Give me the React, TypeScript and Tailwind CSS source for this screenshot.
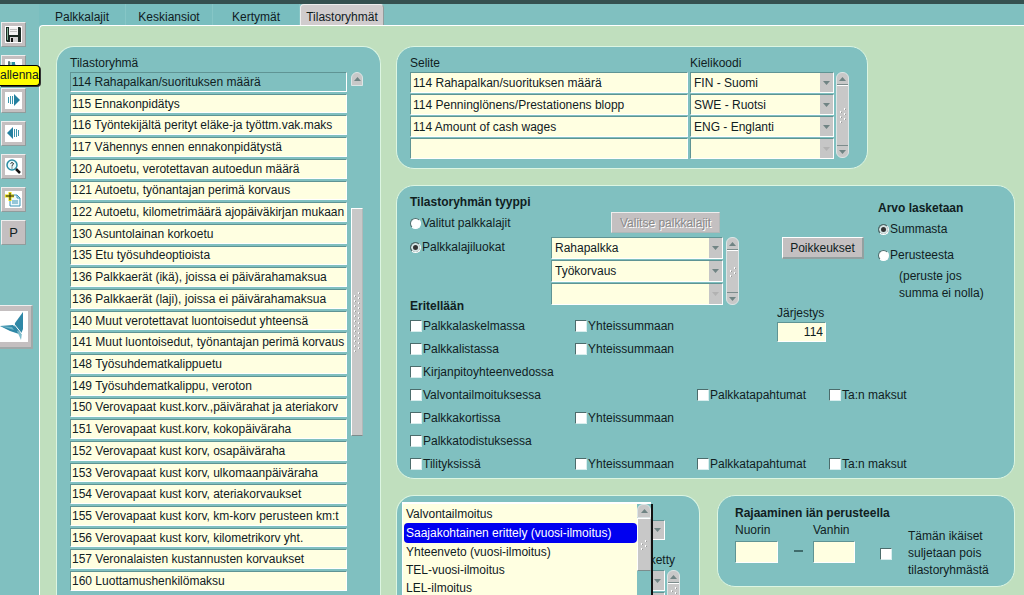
import type { ReactNode } from "react";

const groups = [
  "114 Rahapalkan/suorituksen määrä",
  "115 Ennakonpidätys",
  "116 Työntekijältä perityt eläke-ja työttm.vak.maks",
  "117 Vähennys ennen ennakonpidätystä",
  "120 Autoetu, verotettavan autoedun määrä",
  "121 Autoetu, työnantajan perimä korvaus",
  "122 Autoetu, kilometrimäärä ajopäiväkirjan mukaan",
  "130 Asuntolainan korkoetu",
  "135 Etu työsuhdeoptioista",
  "136 Palkkaerät (ikä), joissa ei päivärahamaksua",
  "136 Palkkaerät (laji), joissa ei päivärahamaksua",
  "140 Muut verotettavat luontoisedut yhteensä",
  "141 Muut luontoisedut, työnantajan perimä korvaus",
  "148 Työsuhdematkalippuetu",
  "149 Työsuhdematkalippu, veroton",
  "150 Verovapaat kust.korv.,päivärahat ja ateriakorv",
  "151 Verovapaat kust.korv, kokopäiväraha",
  "152 Verovapaat kust korv, osapäiväraha",
  "153 Verovapaat kust korv, ulkomaanpäiväraha",
  "154 Verovapaat kust korv, ateriakorvaukset",
  "155 Verovapaat kust korv, km-korv perusteen km:t",
  "156 Verovapaat kust korv, kilometrikorv yht.",
  "157 Veronalaisten kustannusten korvaukset",
  "160 Luottamushenkilömaksu",
];

const languages = [
  ["114 Rahapalkan/suorituksen määrä", "FIN - Suomi"],
  ["114 Penninglönens/Prestationens blopp", "SWE - Ruotsi"],
  ["114 Amount of cash wages", "ENG - Englanti"],
  ["", ""],
];

const breakdowns = [
  { name: "Palkkalaskelmassa", row: "row-start-2", total: true, events: false },
  { name: "Palkkalistassa", row: "row-start-3", total: true, events: false },
  { name: "Kirjanpitoyhteenvedossa", row: "row-start-4", total: false, events: false },
  { name: "Valvontailmoituksessa", row: "row-start-5", total: false, events: true },
  { name: "Palkkakortissa", row: "row-start-6", total: true, events: false },
  { name: "Palkkatodistuksessa", row: "row-start-7", total: false, events: false },
  { name: "Tilityksissä", row: "row-start-8", total: true, events: true },
];

const reports = [
  "Valvontailmoitus",
  "Saajakohtainen erittely (vuosi-ilmoitus)",
  "Yhteenveto (vuosi-ilmoitus)",
  "TEL-vuosi-ilmoitus",
  "LEL-ilmoitus",
];

const field =
  "block min-w-0 border border-t-[#5f9494] border-l-[#5f9494] border-r-white border-b-white bg-[#ffffe1] outline-none";

const panel = "border border-[#dcf5e2] bg-[#80c0c0]";

function Arrow({ up = false, faint = false }: { up?: boolean; faint?: boolean }) {
  return (
    <svg width="7" height="4" viewBox="0 0 7 4" aria-hidden="true">
      <path d={up ? "M0 4 3.500 0 7 4z" : "M0 0h7L3.500 4z"} fill={faint ? "#b2b2b2" : "#708484"} />
    </svg>
  );
}

function Select({
  value,
  label,
  faint = false,
  className = "",
}: {
  value: string;
  label: string;
  faint?: boolean;
  className?: string;
}) {
  return (
    <div className={`relative ${className}`}>
      <select aria-label={label} className={`${field} h-full w-full appearance-none pr-4 pl-[3px]`}>
        <option>{value}</option>
      </select>
      <span className="pointer-events-none absolute top-px right-px bottom-px flex w-[13px] items-center justify-center bg-[#c6c6c6]">
        <Arrow faint={faint} />
      </span>
    </div>
  );
}

function Grip({ rows }: { rows: number }) {
  return (
    <svg width="8" height={rows * 5} aria-hidden="true">
      {Array.from({ length: rows }, (_, i) => (
        <g key={i}>
          <rect x="1" y={i * 5 + 3} width="1" height="2" fill="#fff" />
          <rect x="2" y={i * 5 + 4} width="1" height="1" fill="#999" />
          <rect x="5" y={i * 5} width="1" height="2" fill="#fff" />
          <rect x="6" y={i * 5 + 1} width="1" height="1" fill="#999" />
        </g>
      ))}
    </svg>
  );
}

function ScrollBar({ rows = 2 }: { rows?: number }) {
  return (
    <div className="flex w-[13px] shrink-0 flex-col overflow-hidden rounded-md border border-[#dde6e6] bg-[#c8c8c8]">
      <span className="flex h-3 shrink-0 items-center justify-center border-b border-[#7c8c8c]">
        <Arrow up />
      </span>
      <span className="flex flex-1 items-center justify-center border-t border-white">
        <Grip rows={rows} />
      </span>
      <span className="flex h-3 shrink-0 items-center justify-center border-t border-[#7c8c8c]">
        <Arrow />
      </span>
    </div>
  );
}

const box =
  "size-3 shrink-0 appearance-none border border-t-[#4c6c6c] border-l-[#4c6c6c] border-r-[#d8eeee] border-b-[#d8eeee] bg-white";

function Check({ children, className = "" }: { children: ReactNode; className?: string }) {
  return (
    <label className={`flex items-center gap-px ${className}`}>
      <input type="checkbox" className={box} />
      {children}
    </label>
  );
}

function Radio({ name, checked, children }: { name: string; checked?: boolean; children: ReactNode }) {
  return (
    <label className="flex h-[18px] items-center gap-px">
      <input
        type="radio"
        name={name}
        defaultChecked={checked}
        className="size-[11px] shrink-0 appearance-none rounded-full border border-t-[#4c6c6c] border-l-[#4c6c6c] border-r-white border-b-white bg-white checked:bg-[#333] checked:shadow-[inset_0_0_0_2px_#d5e5e5]"
      />
      {children}
    </label>
  );
}

function ToolButton({ label, children }: { label: string; children: ReactNode }) {
  return (
    <button
      aria-label={label}
      className="flex size-[25px] items-center justify-center border border-t-[#eee] border-l-[#eee] border-r-[#909c9c] border-b-[#909c9c] bg-[#c4bfc0]"
    >
      {children}
    </button>
  );
}

function Glyph({ children }: { children: ReactNode }) {
  return (
    <svg width="17" height="17" viewBox="0 0 17 17" className="bg-white" aria-hidden="true">
      {children}
    </svg>
  );
}

function Toolbar() {
  return (
    <nav className="relative w-[39px] shrink-0 pt-[18px]">
      <div className="flex flex-col gap-2 pl-px">
        <ToolButton label="Tallenna">
          <Glyph>
            <path d="M1 1h14l1 1v14H2l-1-1z" fill="#1c2a24" />
            <path d="M2 2h1v12H2z" fill="#7fae92" />
            <path d="M4 1h9v8H4z" fill="#f4f4f4" />
            <path d="M5 3.500h7M5 5.500h7" stroke="#c0c0c0" />
            <path d="M5 11h8v5H5z" fill="#d4d4d4" />
            <path d="M6 12h2v4H6z" fill="#111" />
          </Glyph>
        </ToolButton>
        <ToolButton label="Avaa">
          <Glyph>
            <path d="M3 3h6l2 3v8H3z" fill="#9fd0c8" />
            <path d="M4 2v8M3 7l6 3" stroke="#123" />
            <path d="M7 3h3v3H7z" fill="#2b8f9f" />
          </Glyph>
        </ToolButton>
        <ToolButton label="Seuraava">
          <Glyph>
            <path d="M9 2l6 6-6 6z" fill="#2480a0" />
            <path d="M3.500 5v6M5.500 4v8M7.500 4v8" stroke="#3a94ac" />
          </Glyph>
        </ToolButton>
        <ToolButton label="Edellinen">
          <Glyph>
            <path d="M8 2L2 8l6 6z" fill="#2480a0" />
            <path d="M9.500 4v8M11.500 4v8M13.500 5v6" stroke="#3a94ac" />
          </Glyph>
        </ToolButton>
        <ToolButton label="Haku">
          <Glyph>
            <circle cx="7" cy="7" r="5" fill="#e8f8fa" stroke="#2b8ca4" strokeWidth="1.500" />
            <path d="M5.500 5.500q1.500-2 3 0 0 1-1.500 2v1M7 9.500v1" stroke="#222" fill="none" />
            <path d="M11 11l4 4" stroke="#111" strokeWidth="2.500" />
          </Glyph>
        </ToolButton>
        <ToolButton label="Uusi">
          <Glyph>
            <path d="M5 4h7l3 3v8H5z" fill="#eef9fb" stroke="#3a94b4" />
            <path d="M12 4v3h3M7 12h6M7 10h6" stroke="#3a94b4" fill="none" />
            <path d="M0 5h9M5 1v9" stroke="#e8dc10" strokeWidth="3" />
            <path d="M1 5h8M5 2v7" stroke="#222" />
          </Glyph>
        </ToolButton>
        <ToolButton label="P">
          <span className="text-[13px]">P</span>
        </ToolButton>
      </div>
      <button
        aria-label="Etusivu"
        className="mt-[60px] flex h-11 w-[33px] items-center border-t border-r-2 border-b-2 border-t-[#eee] border-r-[#a0a8a8] border-b-[#a0a8a8] bg-[#c4bfc0]"
      >
        <svg width="28" height="31" viewBox="0 0 28 31" className="bg-white" aria-hidden="true">
          <path d="M23 1v17l-2 5-7-6 1-5z" fill="#2f87a6" />
          <path d="M0 15l13-1 3 3 3 6-9-3z" fill="#2f87a6" />
          <path d="M0 15l12 1 2 3z" fill="#6fb4c8" />
          <path d="M17 20l5 2-1 7z" fill="#7cbccc" />
          <path d="M14 13l8 10" stroke="#fff" />
        </svg>
      </button>
      <div
        role="tooltip"
        className="absolute top-[61px] -right-px left-0 rounded-r-sm border border-l-0 border-black bg-[#ffff00] leading-[19px] shadow-[1px_1px_0_#333]"
      >
        allenna
      </div>
    </nav>
  );
}

function Tabs() {
  return (
    <div role="tablist" className="flex h-[21px] items-stretch">
      {["Palkkalajit", "Keskiansiot", "Kertymät"].map((t) => (
        <button key={t} role="tab" aria-selected="false" className="w-[87px] border-r border-[#86c6c6] bg-[#79bebf] pt-1">
          {t}
        </button>
      ))}
      <button
        role="tab"
        aria-selected="true"
        className="-mb-px w-[84px] rounded-t border border-b-0 border-t-[#eee] border-l-[#eee] border-r-[#909c9c] bg-[#d0cccd] pt-0.5"
      >
        Tilastoryhmät
      </button>
    </div>
  );
}

function GroupList() {
  return (
    <section className={`${panel} flex w-[325px] shrink-0 flex-col rounded-t-[18px] border-b-0 pt-2 pb-1 pl-[13px]`}>
      <h2 className="leading-[17px]">Tilastoryhmä</h2>
      <div className="flex min-h-0 flex-1 gap-1">
        <div className="flex w-[277px] flex-col gap-0.5">
          {groups.map((g, i) => (
            <input
              key={g}
              aria-label="Tilastoryhmä"
              defaultValue={g}
              className={`${field} min-h-0 w-full flex-1 pl-px ${i === 0 ? "border-r-[#8acaca] border-b-[#8acaca] bg-[#80c0c0]!" : ""}`}
            />
          ))}
        </div>
        <div className="flex w-3 flex-col">
          <button
            aria-label="Ylös"
            className="flex h-[14px] items-center justify-center rounded-t-md border border-[#dde6e6] bg-[#c8c8c8]"
          >
            <Arrow up />
          </button>
          <div className="mt-[122px] flex h-[228px] items-center justify-center border border-t-white border-l-white border-r-[#b0b8b8] border-b-[#7c8c8c] bg-[#c8c8c8]">
            <Grip rows={12} />
          </div>
        </div>
      </div>
    </section>
  );
}

function Descriptions() {
  return (
    <section className={`${panel} flex w-[472px] rounded-[18px] pt-2 pb-2 pl-[13px]`}>
      <table className="border-separate border-spacing-0">
        <thead>
          <tr className="h-[17px] text-left">
            <th className="font-normal leading-[17px]">Selite</th>
            <th className="font-normal leading-[17px]">Kielikoodi</th>
          </tr>
        </thead>
        <tbody>
          {languages.map(([text, code], i) => (
            <tr key={i}>
              <td className="pr-0.5 pb-px">
                <input aria-label="Selite" defaultValue={text} className={`${field} h-[21px] w-[278px] pl-0.5`} />
              </td>
              <td className="pb-px">
                <Select label="Kielikoodi" value={code} faint={code === ""} className="h-[21px] w-[144px]" />
              </td>
            </tr>
          ))}
        </tbody>
      </table>
      <div className="ml-0.5 flex pt-[17px] pb-0.5">
        <ScrollBar rows={3} />
      </div>
    </section>
  );
}

function GroupType() {
  return (
    <section className={`${panel} mt-4 rounded-[18px] pt-2 pb-[3px] pl-[13px]`}>
      <div className="flex">
        <div className="w-[141px]">
          <h2 className="font-bold leading-4 whitespace-nowrap">Tilastoryhmän tyyppi</h2>
          <div className="mt-1 flex flex-col gap-1.5">
            <Radio name="tyyppi">Valitut palkkalajit</Radio>
            <Radio name="tyyppi" checked>
              Palkkalajiluokat
            </Radio>
          </div>
        </div>
        <div className="w-[188px] pt-[18px]">
          <button
            disabled
            className="ml-[60px] block h-[21px] w-[109px] border border-t-[#eee] border-l-[#eee] border-r-[#b0b8b8] border-b-[#b0b8b8] bg-[#c4c0c1] text-[#8a8a8a] [text-shadow:1px_1px_0_#fff]"
          >
            Valitse palkkalajit
          </button>
          <div className="mt-1 flex gap-[3px]">
            <div className="flex flex-1 flex-col gap-px">
              {["Rahapalkka", "Työkorvaus", ""].map((v, i) => (
                <Select key={i} label="Palkkalajiluokka" value={v} faint={v === ""} className="h-[22px]" />
              ))}
            </div>
            <ScrollBar />
          </div>
        </div>
        <div className="ml-[43px] pt-[43px]">
          <button className="block h-[22px] w-[82px] border border-t-white border-l-white border-r-2 border-b-2 border-r-[#93a0a0] border-b-[#93a0a0] bg-[#c4c0c1]">
            Poikkeukset
          </button>
        </div>
        <div className="ml-3.5 pt-1.5">
          <h2 className="font-bold leading-4">Arvo lasketaan</h2>
          <div className="mt-1 flex flex-col gap-2">
            <Radio name="arvo" checked>
              Summasta
            </Radio>
            <Radio name="arvo">Perusteesta</Radio>
          </div>
          <p className="mt-1 pl-[21px] leading-[17px]">
            (peruste jos
            <br />
            summa ei nolla)
          </p>
        </div>
      </div>
      <div className="-mt-2 grid grid-cols-[165px_122px_132px_1fr] grid-rows-[17px_repeat(7,23px)]">
        <h2 className="col-start-1 row-start-1 pt-px font-bold leading-4">Eritellään</h2>
        <label className="col-start-3 row-span-3 row-start-1 mr-[3px] w-[49px] justify-self-end pt-2 leading-4">
          Järjestys
          <input defaultValue="114" className={`${field} mt-px h-5 w-full pr-0.5 text-right`} />
        </label>
        {breakdowns.map((b) => (
          <div key={b.name} className={`${b.row} col-span-4 col-start-1 grid grid-cols-subgrid`}>
            <Check className="justify-self-start">{b.name}</Check>
            {b.total && <Check className="col-start-2 justify-self-start">Yhteissummaan</Check>}
            {b.events && (
              <>
                <Check className="col-start-3 justify-self-start">Palkkatapahtumat</Check>
                <Check className="col-start-4 justify-self-start">Ta:n maksut</Check>
              </>
            )}
          </div>
        ))}
      </div>
    </section>
  );
}

function ReportPicker() {
  return (
    <section className={`${panel} relative w-[304px] rounded-t-[18px] border-b-0 pt-6 pl-[13px]`}>
      <Select label="Ilmoitus" value="" className="h-5 w-[255px]" />
      <p className="mt-2.5 w-[265px] text-right leading-5">ketty</p>
      <div className="flex gap-0.5">
        <div className="flex w-[255px] flex-col gap-px">
          <Select label="Rivi 1" value="" className="h-[21px]" />
          <Select label="Rivi 2" value="" className="h-[21px]" />
        </div>
        <ScrollBar />
      </div>
      <div className="absolute top-1.5 bottom-0 left-[5px] flex w-[249px] border-t-2 border-l border-white bg-[#ffffe1] shadow-[2px_2px_0_#111]">
        <ul role="listbox" aria-label="Ilmoitus" className="flex-1 pt-px pl-px">
          {reports.map((r, i) => (
            <li
              key={r}
              role="option"
              aria-selected={i === 1}
              className={i === 1 ? "rounded-sm bg-[#0000f0] pl-0.5 leading-5 text-white" : "pl-0.5 leading-[18px]"}
            >
              {r}
            </li>
          ))}
        </ul>
        <div className="w-[14px] bg-[#80c0c0]">
          <div className="flex h-[14px] items-center justify-center rounded-t-md border border-[#dde6e6] bg-[#c8c8c8]">
            <Arrow up />
          </div>
          <div className="flex h-[53px] items-center justify-center border border-t-white border-l-white border-r-[#b0b8b8] border-b-[#7c8c8c] bg-[#c8c8c8]">
            <Grip rows={2} />
          </div>
        </div>
      </div>
    </section>
  );
}

function AgeLimit() {
  return (
    <section className={`${panel} w-[298px] self-start rounded-[18px] pt-[9px] pb-[7px] pl-[17px]`}>
      <h2 className="font-bold leading-4">Rajaaminen iän perusteella</h2>
      <div className="flex">
        <label className="w-[43px] leading-[18px]">
          Nuorin
          <input className={`${field} mt-0.5 h-[22px] w-full`} />
        </label>
        <span className="mx-4 mt-[29px] h-0.5 w-[9px] bg-[#3f6c6c]" />
        <label className="-ml-1.5 w-[42px] leading-[18px]">
          Vanhin
          <input className={`${field} mt-0.5 h-[22px] w-full`} />
        </label>
        <label className="ml-[25px] flex items-center gap-4 pt-[7px] leading-[17px]">
          <input type="checkbox" className={box} />
          <span>
            Tämän ikäiset
            <br />
            suljetaan pois
            <br />
            tilastoryhmästä
          </span>
        </label>
      </div>
    </section>
  );
}

export default function App() {
  return (
    <div className="flex h-screen flex-col overflow-hidden bg-[#80c0c0] font-['Liberation_Sans',Arial,sans-serif] text-[12px] text-[#10201f]">
      <div className="h-1 shrink-0 bg-[#35504f]" />
      <div className="flex min-h-0 flex-1">
        <Toolbar />
        <div className="flex min-w-0 flex-1 flex-col">
          <Tabs />
          <main className="flex min-h-0 flex-1 gap-[15px] overflow-hidden rounded-tl border-t border-l border-white bg-[#c0dfbe] pt-5 pr-[9px] pl-4">
            <GroupList />
            <div className="flex min-w-0 flex-1 flex-col">
              <Descriptions />
              <GroupType />
              <div className="mt-4 flex min-h-0 flex-1 justify-between overflow-hidden">
                <ReportPicker />
                <AgeLimit />
              </div>
            </div>
          </main>
        </div>
      </div>
    </div>
  );
}
